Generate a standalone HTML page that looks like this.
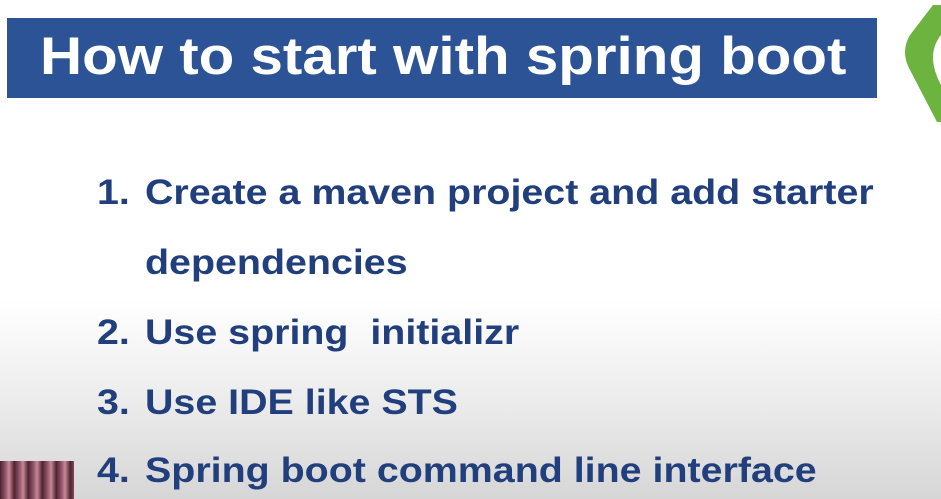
<!DOCTYPE html>
<html><head><style>
body{margin:0;width:941px;height:499px;overflow:hidden;position:relative;font-family:"Liberation Sans",sans-serif;
background:linear-gradient(to bottom,#fff 0,#fff 300px,#ececec 400px,#d6d6d6 499px);}
.banner{position:absolute;left:7px;top:18px;width:870px;height:80px;background:#2b5396;}
.banner span{position:absolute;left:33px;top:8px;color:#fff;font-weight:bold;font-size:53px;white-space:nowrap;transform-origin:0 0;transform:scaleX(1.10);}
.li{position:absolute;color:#213f7c;font-weight:bold;font-size:35px;white-space:nowrap;transform-origin:0 0;transform:scaleX(1.125);}
.n{position:absolute;left:97px;}
.t{position:absolute;left:145px;}
</style></head><body>
<div class="banner"><span>How to start with spring boot</span></div>
<svg style="position:absolute;left:895px;top:0" width="46" height="130"><path d="M38 5 L15 35 Q5 52 15 70 L42 122 L46 122 L46 5 Z" fill="#6db33f"/><path d="M46 35 Q30 55 46 85 Z" fill="#fff"/></svg>
<div class="li n" style="top:173px">1.</div><div class="li t" style="top:173px">Create a maven project and add starter</div>
<div class="li t" style="top:243px">dependencies</div>
<div class="li n" style="top:313px">2.</div><div class="li t" style="top:313px">Use spring&nbsp; initializr</div>
<div class="li n" style="top:383px">3.</div><div class="li t" style="top:383px">Use IDE like STS</div>
<div class="li n" style="top:451px">4.</div><div class="li t" style="top:451px">Spring boot command line interface</div>
<div style="position:absolute;left:0;top:461px;width:74px;height:38px;background:repeating-linear-gradient(90deg,#4a2230 0,#9a5a70 6px,#c58a9a 9px,#5a2838 14px)"></div>
</body></html>
